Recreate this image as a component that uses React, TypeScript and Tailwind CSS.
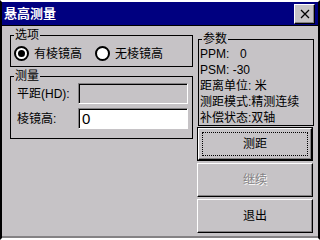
import React from "react";

const GRAY = "bg-[#c6c3c6]";

const GroupLabel: React.FC<{ text: string }> = ({ text }) => (
  <div className="-mt-[7px] ml-[3px] w-fit bg-[#c6c3c6] px-[1px] text-[12px] leading-[12px] text-black">
    {text}
  </div>
);

const Radio: React.FC<{ checked?: boolean; label: string }> = ({ checked, label }) => (
  <div className="flex items-center gap-[5px]">
    <div className="flex h-[15px] w-[15px] items-center justify-center rounded-full border-2 border-black bg-white">
      {checked && <div className="h-[7px] w-[7px] rounded-full bg-black" />}
    </div>
    <span className="text-[12px] leading-[14px]">{label}</span>
  </div>
);

const Field: React.FC<{ value?: string; disabled?: boolean }> = ({ value, disabled }) => (
  <div
    className={
      "h-[21px] w-[110px] border border-t-[#848284] border-l-[#848284] border-r-white border-b-white " +
      "shadow-[inset_1px_1px_0_#000] pl-[3px] text-[15px] leading-[19px] " +
      (disabled ? "bg-[#c6c3c6]" : "bg-white")
    }
  >
    {value}
  </div>
);

const Btn: React.FC<{ label: string; primary?: boolean; disabled?: boolean }> = ({
  label,
  primary,
  disabled,
}) => (
  <div className={primary ? "border border-black" : ""}>
    <div
      className={
        "flex items-center justify-center border border-t-white border-l-white border-r-black border-b-black " +
        "shadow-[inset_-1px_-1px_0_#848284] text-[12px] " +
        (primary ? "h-[32px]" : "h-[34px]")
      }
    >
      {primary ? (
        <div className="flex h-[24px] w-[106px] items-center justify-center border border-dotted border-black">
          {label}
        </div>
      ) : (
        <span
          className={
            disabled ? "text-[#848284] [text-shadow:1px_1px_0_#fff]" : "text-black"
          }
        >
          {label}
        </span>
      )}
    </div>
  </div>
);

export default function App() {
  return (
    <div
      className={
        "flex h-[240px] w-[320px] flex-col overflow-hidden border-t-2 border-l-2 border-r-2 border-b-2 " +
        "border-t-white border-l-black border-r-black border-b-white " +
        "font-['Liberation_Sans','Noto_Sans_CJK_SC',sans-serif] text-black " +
        GRAY
      }
    >
      {/* title bar */}
      <div className="flex h-[24px] shrink-0 items-center justify-between border-b border-black bg-[#000080] pl-[2px] pr-[3px]">
        <span className="text-[13px] font-bold leading-[14px] text-white">悬高测量</span>
        <div className="flex h-[20px] w-[21px] items-center justify-center border border-t-white border-l-white border-r-black border-b-black bg-[#c6c3c6] shadow-[inset_-1px_-1px_0_#848284]">
          <svg width="10" height="10" viewBox="0 0 10 10">
            <path d="M1 1L9 9M9 1L1 9" stroke="#000" strokeWidth="1.3" />
          </svg>
        </div>
      </div>

      {/* client */}
      <div className="flex flex-1 border-b-2 border-b-[#848284] pl-[8px]">
        {/* left column */}
        <div className="flex w-[183px] flex-col">
          <div className="mt-[9px] h-[32px] border border-black">
            <GroupLabel text="选项" />
            <div className="ml-[3px] mt-[5px] flex gap-[13px]">
              <Radio checked label="有棱镜高" />
              <Radio label="无棱镜高" />
            </div>
          </div>

          <div className="mt-[9px] h-[63px] border border-black">
            <GroupLabel text="测量" />
            <div className="mt-[1px] grid grid-cols-[61px_110px] items-center gap-y-[4px] pl-[6px] text-[12px]">
              <span>平距(HD):</span>
              <Field disabled />
              <span>棱镜高:</span>
              <Field value="0" />
            </div>
          </div>
        </div>

        {/* right column */}
        <div className="ml-[4px] flex w-[116px] flex-col">
          <div className="ml-[1px] mt-[13px] h-[87px] w-[116px] border border-black">
            <GroupLabel text="参数" />
            <div className="mt-[1px] flex flex-col pl-[1px] text-[12px]">
              <div className="h-[16px] leading-[16px]">
                <span className="inline-block w-[40px]">PPM:</span>0
              </div>
              <div className="h-[16px] leading-[16px]">PSM: -30</div>
              <div className="h-[16px] leading-[16px]">距离单位: 米</div>
              <div className="h-[16px] leading-[16px]">测距模式:精测连续</div>
              <div className="h-[16px] leading-[16px]">补偿状态:双轴</div>
            </div>
          </div>

          <div className="mt-[1px] flex flex-col gap-[2px]">
            <Btn label="测距" primary />
            <Btn label="继续" disabled />
            <Btn label="退出" />
          </div>
        </div>
      </div>
    </div>
  );
}
